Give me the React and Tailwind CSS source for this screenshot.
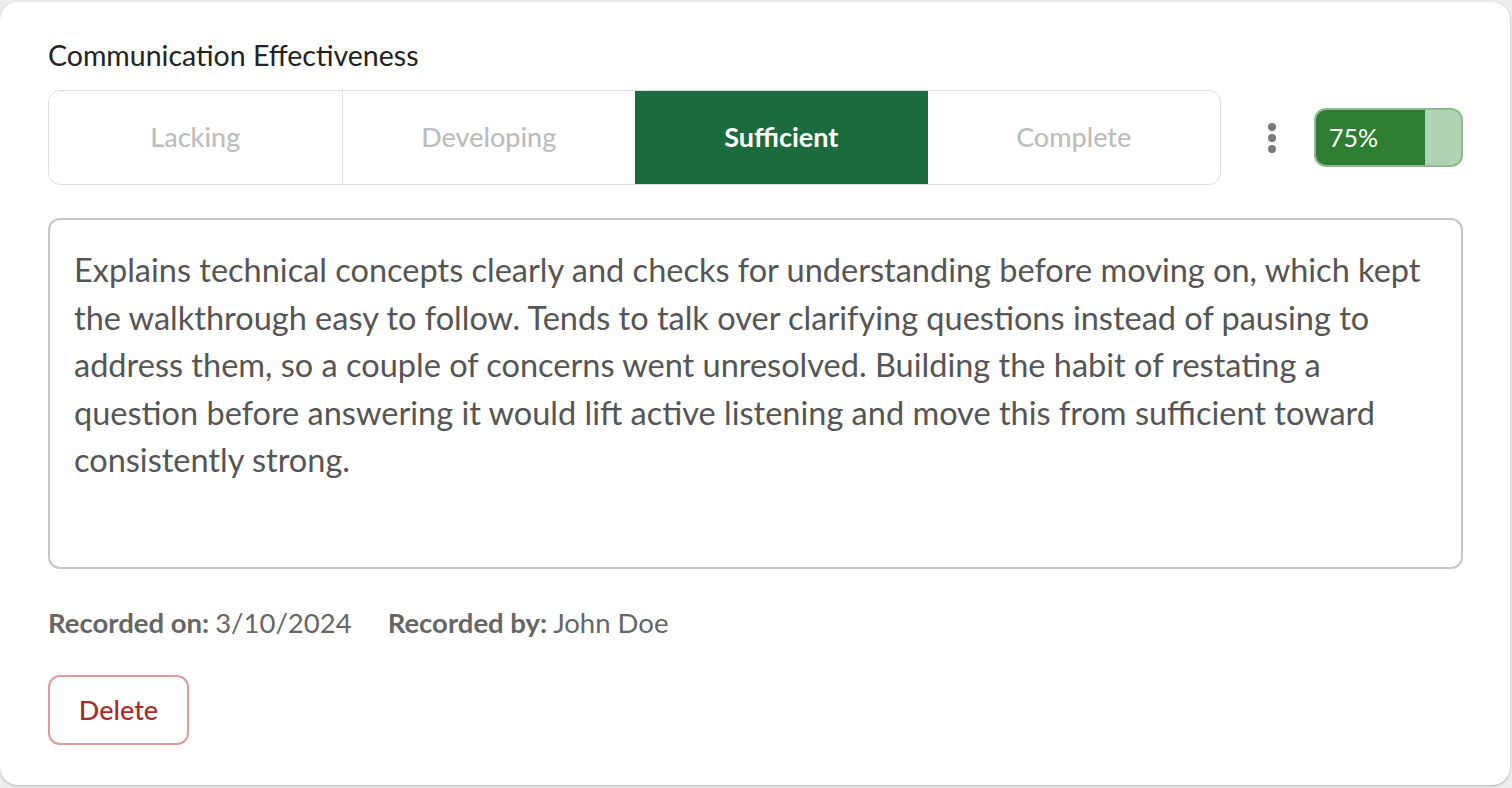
import React from "react";

const segments = ["Lacking", "Developing", "Sufficient", "Complete"];

const lines = [
  "Explains technical concepts clearly and checks for understanding before moving on, which kept",
  "the walkthrough easy to follow. Tends to talk over clarifying questions instead of pausing to",
  "address them, so a couple of concerns went unresolved. Building the habit of restating a",
  "question before answering it would lift active listening and move this from sufficient toward",
  "consistently strong.",
];

export default function App() {
  const font = { fontFamily: "Lato, 'Noto Sans', sans-serif" };
  return (
    <div className="w-[1512px] h-[788px] bg-[#ededed] pt-[2px] pr-[2px] pb-[3px] overflow-hidden" style={font}>
      <div className="h-full bg-white rounded-[18px] shadow-[0_1px_3px_rgba(0,0,0,0.25)] pt-[38px] pl-[48px] pr-[47px]">
        <h2 className="text-[28.5px] leading-[30px] text-[#222]">Communication Effectiveness</h2>
        <div className="mt-[20px] flex items-center">
          <div className="flex w-[1173px] h-[95px] border border-[#dcdcdc] rounded-[12px] overflow-hidden">
            {segments.map((s, i) => (
              <div
                key={s}
                className={
                  i === 2
                    ? "flex-1 flex items-center justify-center bg-[#1c6b3e] text-white text-[27px] font-bold"
                    : i === 1
                    ? "flex-1 flex items-center justify-center text-[#bdbdbd] text-[27px] font-medium border-l border-[#dcdcdc]"
                    : "flex-1 flex items-center justify-center text-[#bdbdbd] text-[27px] font-medium"
                }
              >
                {s}
              </div>
            ))}
          </div>
          <div className="ml-[43px] w-[15px] flex flex-col items-center gap-[3px]">
            <span className="w-[8px] h-[8px] rounded-full bg-[#7a7a7a]" />
            <span className="w-[8px] h-[8px] rounded-full bg-[#7a7a7a]" />
            <span className="w-[8px] h-[8px] rounded-full bg-[#7a7a7a]" />
          </div>
          <div className="ml-[35px] relative w-[149px] h-[59px] rounded-[12px] border-2 border-[#8fb991] bg-[#b0d3b1] overflow-hidden">
            <div className="absolute left-0 top-0 bottom-0 bg-[#2e7d33]" style={{ width: "75%" }} />
            <span className="absolute left-[13px] top-0 bottom-0 flex items-center text-white text-[25px]">75%</span>
          </div>
        </div>
        <div className="mt-[33px] h-[351px] border-2 border-[#c6c6c6] rounded-[12px] pt-[26px] pl-[24px] pr-[10px] text-[32.5px] leading-[47.5px] text-[#555] overflow-hidden">
          {lines.map((l) => (
            <div key={l} className="whitespace-nowrap">{l}</div>
          ))}
        </div>
        <div className="mt-[38px] flex items-center text-[27.5px] leading-[32px] text-[#666]">
          <span className="font-bold">Recorded on:</span>
          <span className="ml-[6px]">3/10/2024</span>
          <span className="ml-[36px] font-bold">Recorded by:</span>
          <span className="ml-[6px]">John Doe</span>
        </div>
        <button className="mt-[36px] w-[141px] h-[70px] border-2 border-[#dc9c9c] rounded-[12px] text-[#a82a2a] text-[27px] font-medium flex items-center justify-center bg-white">
          Delete
        </button>
      </div>
    </div>
  );
}
